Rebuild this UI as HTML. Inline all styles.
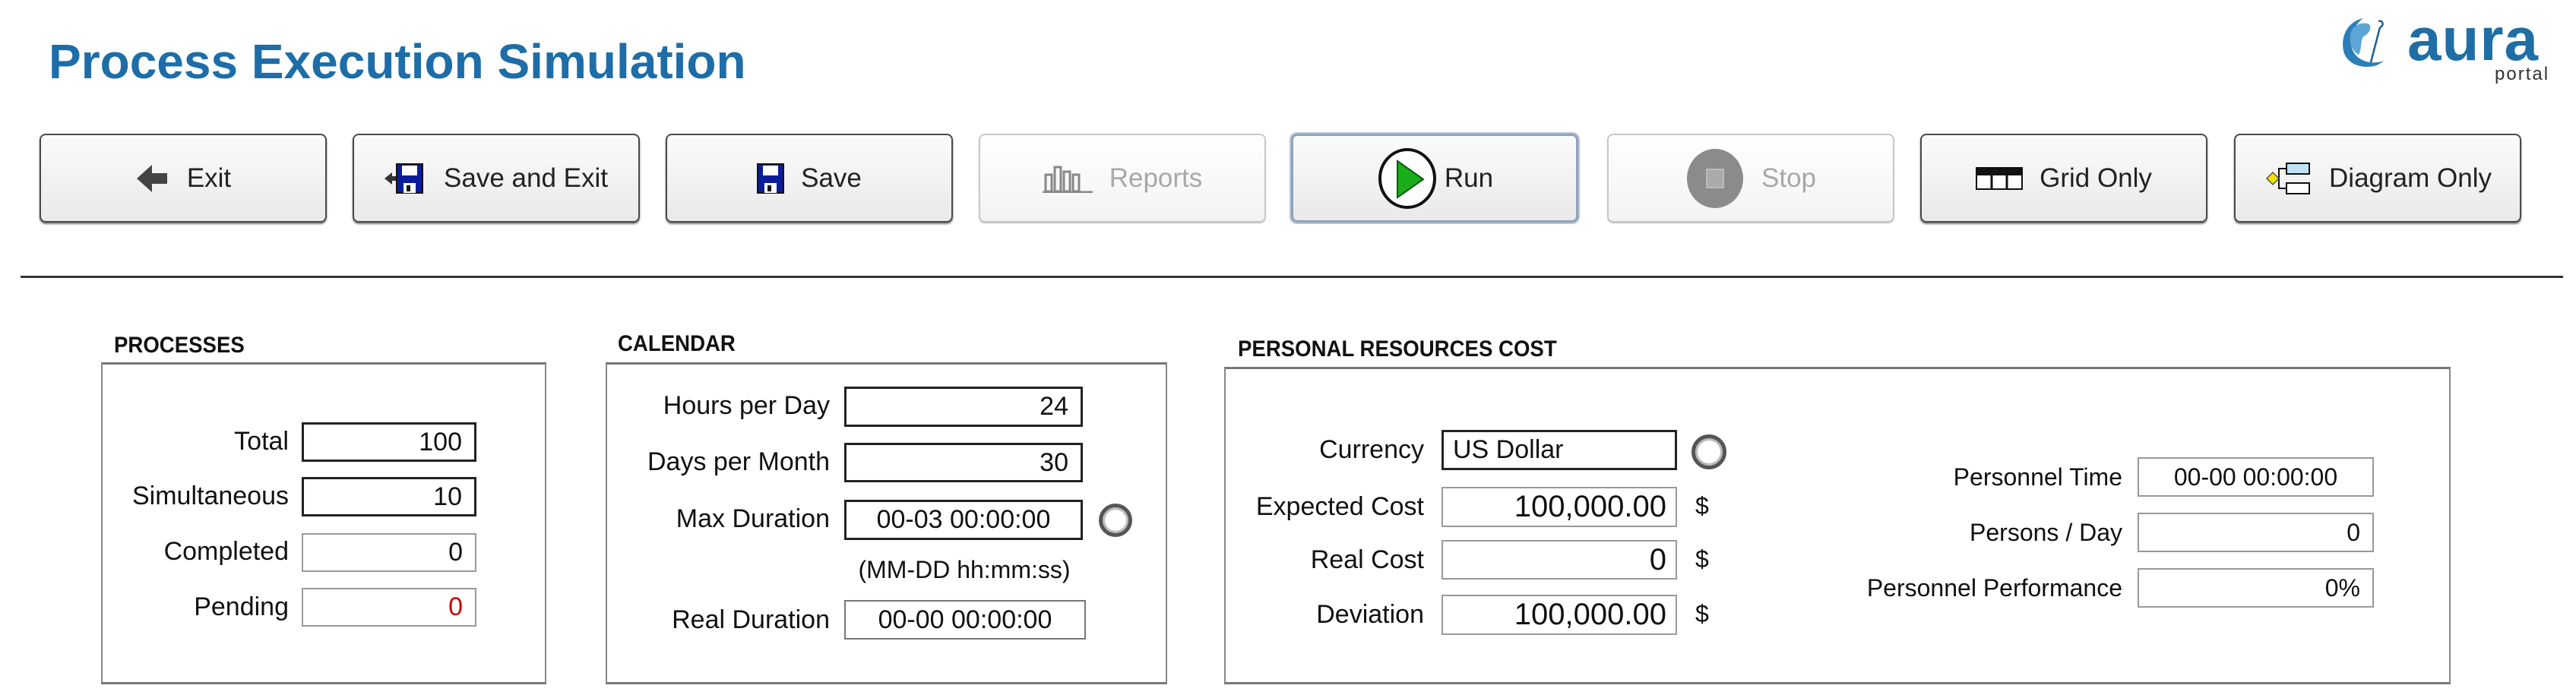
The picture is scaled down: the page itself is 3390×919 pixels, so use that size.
<!DOCTYPE html>
<html><head><meta charset="utf-8"><style>
*{margin:0;padding:0;box-sizing:border-box}
body{width:3390px;height:919px;background:#fff;position:relative;overflow:hidden;font-family:"Liberation Sans",Arial,sans-serif;color:#111}
.a{position:absolute}
.title{left:64px;top:44px;font-size:64px;font-weight:bold;color:#1d6da8;white-space:nowrap}
.btn{position:absolute;top:176px;width:378px;height:117px;border:2px solid #4a4a4a;border-radius:8px;background:linear-gradient(#fbfbfb,#e9e9e9);box-shadow:0 2px 2px #777;display:flex;align-items:center;justify-content:center;gap:22px;font-size:35px;color:#222}
.btn.dis{border-color:#c8c8c8;box-shadow:0 1px 1px #bbb;color:#a8a8a8;background:linear-gradient(#fff,#f3f3f3)}
.btn.run{border:3px solid #8ea3ba;box-shadow:0 0 0 2px #b5c4d4}
.sep{left:27px;top:363px;width:3346px;height:3px;background:#333}
.sec{font-size:30px;font-weight:bold;white-space:nowrap;transform:scaleX(.92);transform-origin:left}
.box{border:2px solid #888;border-top:3px solid #777;border-bottom:3px solid #777}
.lbl{position:absolute;font-size:34px;white-space:nowrap;text-align:right}
.in{position:absolute;border:2px solid #999;background:#fff;font-size:34px;text-align:right;padding-right:16px;display:flex;align-items:center;justify-content:flex-end;white-space:nowrap}
.in.k{border:3px solid #222}
.ring{position:absolute;border:5px solid #555;border-radius:50%;background:#fff;box-shadow:inset 0 0 0 3px #bbb}
.dol{position:absolute;font-size:32px}
</style></head><body>
<div class="a title">Process Execution Simulation</div>

<svg class="a" style="left:3080px;top:22px" width="70" height="70" viewBox="0 0 70 70">
<path d="M30 2 C10 6 0 25 4 45 C8 62 28 70 48 64 L58 58 C40 64 22 58 16 44 C10 30 18 10 30 2Z" fill="#2b7fb8"/>
<path d="M14 20 C18 10 30 6 38 10 C42 16 36 24 30 26 C26 34 28 44 24 50 C16 46 10 34 14 20Z" fill="#5ba6d6"/>
<path d="M50 6 C56 4 58 12 52 14 M52 14 L40 60" stroke="#1f5f90" stroke-width="2.5" fill="none"/>
</svg>
<div class="a" style="left:3168px;top:6px;font-size:80px;font-weight:bold;color:#1f6ea6;letter-spacing:1px">aura</div>
<div class="a" style="left:3283px;top:84px;font-size:24px;color:#333;letter-spacing:2px">portal</div>

<div class="btn" style="left:52px"><svg width="46" height="40" viewBox="0 0 46 40"><path d="M2 20 L22 2 L22 13 L42 13 L42 27 L22 27 L22 38Z" fill="#444"/></svg><span>Exit</span></div>
<div class="btn" style="left:464px"><svg width="56" height="42" viewBox="0 0 56 42"><path d="M0 21 L10 13 L10 18 L16 18 L16 24 L10 24 L10 29Z" fill="#333"/><rect x="16" y="2" width="34" height="38" fill="#0a1c9c" stroke="#111" stroke-width="2"/><rect x="23" y="4" width="20" height="13" fill="#fff"/><rect x="25" y="27" width="16" height="13" fill="#fff"/><rect x="29" y="30" width="5" height="8" fill="#111"/></svg><span>Save and Exit</span></div>
<div class="btn" style="left:876px"><svg width="36" height="42" viewBox="0 0 36 42"><rect x="1" y="2" width="34" height="38" fill="#0a1c9c" stroke="#111" stroke-width="2"/><rect x="8" y="4" width="20" height="13" fill="#fff"/><rect x="10" y="27" width="16" height="13" fill="#fff"/><rect x="14" y="30" width="5" height="8" fill="#111"/></svg><span>Save</span></div>
<div class="btn dis" style="left:1288px"><svg width="66" height="38" viewBox="0 0 66 38"><g fill="none" stroke="#888" stroke-width="3"><rect x="4" y="14" width="8" height="22"/><rect x="16" y="4" width="8" height="32"/><rect x="28" y="10" width="8" height="26"/><rect x="40" y="14" width="8" height="22"/><path d="M0 37 H66"/></g></svg><span>Reports</span></div>
<div class="btn run" style="left:1699px"><svg width="82" height="82" viewBox="0 0 82 82"><ellipse cx="41" cy="41" rx="36" ry="38" fill="#fff" stroke="#111" stroke-width="4"/><path d="M28 18 L62 42 L28 66Z" fill="#1aae1a" stroke="#0b5a0b" stroke-width="2"/></svg><span style="margin-left:-14px">Run</span></div>
<div class="btn dis" style="left:2115px"><svg width="78" height="80" viewBox="0 0 78 80"><ellipse cx="39" cy="40" rx="37" ry="39" fill="#8b8b8b"/><rect x="28" y="28" width="22" height="24" fill="#aaa" stroke="#bbb" stroke-width="2"/></svg><span>Stop</span></div>
<div class="btn" style="left:2527px"><svg width="62" height="30" viewBox="0 0 62 30"><rect x="1" y="1" width="60" height="28" fill="#fff" stroke="#111" stroke-width="2"/><rect x="1" y="1" width="60" height="10" fill="#111"/><path d="M21 11 V29 M41 11 V29" stroke="#111" stroke-width="3"/></svg><span>Grid Only</span></div>
<div class="btn" style="left:2940px"><svg width="64" height="44" viewBox="0 0 64 44"><rect x="30" y="2" width="30" height="14" fill="#bfe3f5" stroke="#111" stroke-width="2"/><rect x="30" y="28" width="30" height="14" fill="#fff" stroke="#111" stroke-width="2"/><path d="M30 9 H20 V35 H30" fill="none" stroke="#111" stroke-width="2"/><path d="M4 22 L12 14 L20 22 L12 30Z" fill="#f2e000" stroke="#555" stroke-width="1.5"/></svg><span>Diagram Only</span></div>

<div class="a sep"></div>

<div class="a sec" style="left:150px;top:438px">PROCESSES</div>
<div class="a box" style="left:133px;top:477px;width:586px;height:424px"></div>
<div class="lbl" style="right:3010px;top:562px">Total</div>
<div class="in k" style="left:397px;top:556px;width:230px;height:52px">100</div>
<div class="lbl" style="right:3010px;top:634px">Simultaneous</div>
<div class="in k" style="left:397px;top:628px;width:230px;height:52px">10</div>
<div class="lbl" style="right:3010px;top:707px">Completed</div>
<div class="in" style="left:397px;top:702px;width:230px;height:51px">0</div>
<div class="lbl" style="right:3010px;top:780px">Pending</div>
<div class="in" style="left:397px;top:774px;width:230px;height:51px;color:#c00">0</div>

<div class="a sec" style="left:813px;top:436px">CALENDAR</div>
<div class="a box" style="left:797px;top:477px;width:739px;height:424px"></div>
<div class="lbl" style="right:2298px;top:515px">Hours per Day</div>
<div class="in k" style="left:1111px;top:509px;width:314px;height:53px">24</div>
<div class="lbl" style="right:2298px;top:589px">Days per Month</div>
<div class="in k" style="left:1111px;top:583px;width:314px;height:52px">30</div>
<div class="lbl" style="right:2298px;top:664px">Max Duration</div>
<div class="in k" style="left:1111px;top:658px;width:314px;height:53px;justify-content:center;padding:0">00-03 00:00:00</div>
<div class="ring" style="left:1446px;top:663px;width:44px;height:44px"></div>
<div class="lbl" style="left:1118px;width:302px;text-align:center;top:732px;font-size:32px">(MM-DD hh:mm:ss)</div>
<div class="lbl" style="right:2298px;top:797px">Real Duration</div>
<div class="in" style="left:1111px;top:790px;width:318px;height:52px;justify-content:center;padding:0;border-color:#777">00-00 00:00:00</div>

<div class="a sec" style="left:1629px;top:443px">PERSONAL RESOURCES COST</div>
<div class="a box" style="left:1611px;top:483px;width:1614px;height:418px"></div>
<div class="lbl" style="right:1516px;top:573px">Currency</div>
<div class="in k" style="left:1897px;top:566px;width:310px;height:53px;justify-content:flex-start;padding-left:12px">US Dollar</div>
<div class="ring" style="left:2226px;top:572px;width:46px;height:46px"></div>
<div class="lbl" style="right:1516px;top:648px">Expected Cost</div>
<div class="in" style="left:1897px;top:641px;width:310px;height:53px;font-size:40px;padding-right:12px">100,000.00</div>
<div class="dol" style="left:2231px;top:648px">$</div>
<div class="lbl" style="right:1516px;top:718px">Real Cost</div>
<div class="in" style="left:1897px;top:711px;width:310px;height:52px;font-size:40px;padding-right:12px">0</div>
<div class="dol" style="left:2231px;top:718px">$</div>
<div class="lbl" style="right:1516px;top:790px">Deviation</div>
<div class="in" style="left:1897px;top:783px;width:310px;height:53px;font-size:40px;padding-right:12px">100,000.00</div>
<div class="dol" style="left:2231px;top:790px">$</div>

<div class="lbl" style="right:597px;top:610px;font-size:32px">Personnel Time</div>
<div class="in" style="left:2813px;top:602px;width:311px;height:52px;font-size:32px;justify-content:center;padding:0">00-00 00:00:00</div>
<div class="lbl" style="right:597px;top:683px;font-size:32px">Persons / Day</div>
<div class="in" style="left:2813px;top:675px;width:311px;height:52px;font-size:32px">0</div>
<div class="lbl" style="right:597px;top:756px;font-size:32px">Personnel Performance</div>
<div class="in" style="left:2813px;top:748px;width:311px;height:52px;font-size:32px">0%</div>
</body></html>
